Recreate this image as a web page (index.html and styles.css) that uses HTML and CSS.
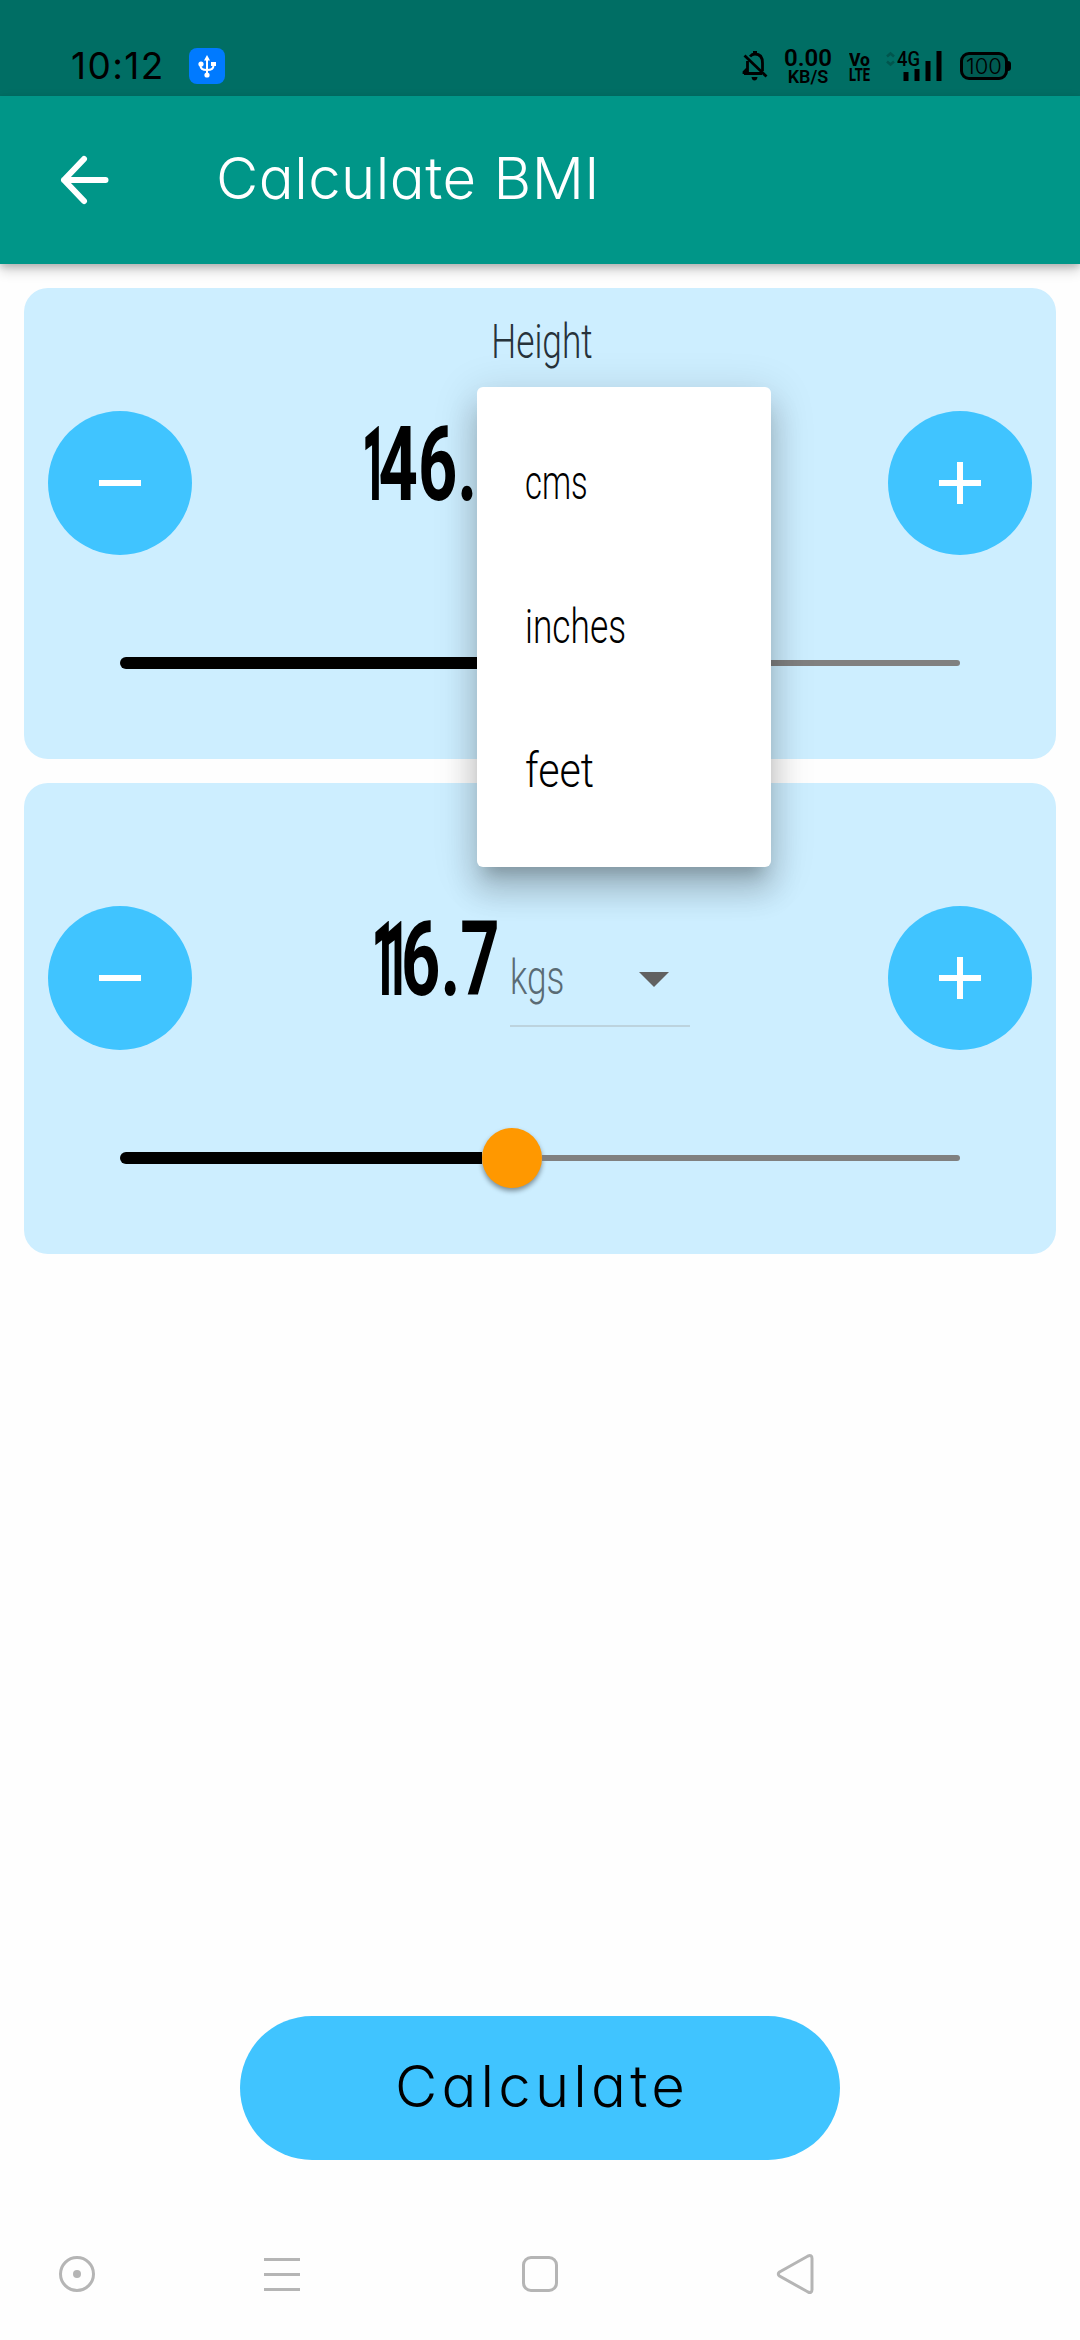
FILE: index.html
```html
<!DOCTYPE html>
<html lang="en">
<head>
<meta charset="utf-8">
<title>Calculate BMI</title>
<link rel="stylesheet" href="styles.css">
</head>
<body>
<div class="screen">
  <header class="status">
    <span class="clock">10:12</span>
    <svg class="usb" viewBox="0 0 36 36"><rect width="36" height="36" rx="8" fill="#007aff"/><path d="M18 9v18M11.500 16v1.500q0 4.500 6.500 4.500t6.500-4.500V16" fill="none" stroke="#fff" stroke-width="2"/><path d="M18 7l3 5.500h-6zM22 14h5v4h-5z" fill="#fff"/><circle cx="12" cy="16" r="2.600" fill="#fff"/><circle cx="18" cy="27" r="2.600" fill="#fff"/></svg>
    <svg class="bell" viewBox="0 0 26 32"><path d="M8 6.500Q10 4 13 4q7.500 0 7.500 9v8M5.500 11v11M2 23.500h18M2 24v-2l4-4" fill="none" stroke="#000" stroke-width="2.800"/><path d="M11 1h4v4h-4zM9.500 27h6q-.5 3.500-3 3.500t-3-3.500z"/><path d="M2.500 5.500L24.500 26.500" stroke="#000" stroke-width="2.800"/></svg>
    <div class="speed"><span class="rate">0.00</span><span class="rate-unit">KB/S</span></div>
    <div class="volte"><span class="vo">Vo</span><span class="lte">LTE</span></div>
    <div class="signal"><svg viewBox="0 0 56 32"><path d="M1 6.500l3.500-3 3.500 3M1 11.500l3.500 3 3.500-3" fill="none" stroke="#00564e" stroke-width="2.600"/><path d="M17.500 22h5v9h-5zM28.500 19h5v12h-5zM39.500 11h5v20h-5zM50.500 1h5v30h-5z"/></svg><span class="net">4G</span></div>
    <div class="battery">100</div>
  </header>
  <div class="appbar">
    <svg class="back" viewBox="0 0 54 60"><path d="M48.500 30H7M27 9L7 30l20 21" fill="none" stroke="#fff" stroke-width="6" stroke-linecap="round" stroke-linejoin="round"/></svg>
    <h1 class="title">Calculate BMI</h1>
  </div>
  <main class="content">
    <section class="card">
      <h2 class="label"><span class="hand">Height</span></h2>
      <div class="row">
        <button class="round"><svg viewBox="0 0 42 42"><path d="M0 18h42v6H0z"/></svg></button>
        <div class="reading"><div class="value height-value"><span class="one">1</span>46.3</div></div>
        <button class="round"><svg viewBox="0 0 42 42"><path d="M0 18h42v6H0zM18 0h6v42h-6z"/></svg></button>
      </div>
      <div class="slider"><span class="fill"></span><span class="track"></span></div>
    </section>
    <section class="card">
      <h2 class="label"><span class="hand">Weight</span></h2>
      <div class="row">
        <button class="round"><svg viewBox="0 0 42 42"><path d="M0 18h42v6H0z"/></svg></button>
        <div class="reading"><div class="value weight-value"><span class="one first">1</span><span class="one">1</span>6.7</div>
          <div class="unit"><span class="hand">kgs</span><svg viewBox="0 0 30 15"><path d="M0 0h30L15 15z" fill="#616161"/></svg></div></div>
        <button class="round"><svg viewBox="0 0 42 42"><path d="M0 18h42v6H0zM18 0h6v42h-6z"/></svg></button>
      </div>
      <div class="slider"><span class="fill"></span><span class="thumb"></span><span class="track"></span></div>
    </section>
  </main>
  <button class="calculate">Calculate</button>
  <nav class="nav">
    <svg viewBox="0 0 40 42"><circle cx="20" cy="21" r="16.500"/><circle cx="20" cy="21" r="4" fill="#b5b5b5" stroke="none"/></svg>
    <svg viewBox="0 0 40 42"><path d="M2 6.500h36M2 21.500h36M2 36.500h36"/></svg>
    <svg viewBox="0 0 40 42"><rect x="3.500" y="4.500" width="33" height="33" rx="7.500"/></svg>
    <svg viewBox="0 0 40 42"><path d="M3.500 19L32 3q4-1.500 4 2.500v31q0 4-4 2.500L3.500 23q-2.500-2 0-4z"/></svg>
  </nav>
  <div class="menu">
    <span class="item"><span class="hand cms">cms</span></span>
    <span class="item"><span class="hand inches">inches</span></span>
    <span class="item"><span class="hand feet">feet</span></span>
  </div>
</div>
</body>
</html>
```
FILE: styles.css
```css
* { box-sizing: border-box; }
body { margin: 0; background: #fff; }
button { border: 0; padding: 0; font: inherit; color: inherit; }
h1, h2 { margin: 0; font-weight: inherit; }
.screen { position: relative; width: 1080px; height: 2340px; display: flex; flex-direction: column; background: #fefefe; overflow: hidden; color: #000; }

.status { height: 96px; flex: none; background: #006e64; display: flex; align-items: flex-start; padding: 48px 0 0 71px; font-family: Roboto, sans-serif; }
.clock { width: 118px; font: 400 37px/36px Inter, sans-serif; letter-spacing: 1.4px; }
.usb { width: 36px; height: 36px; margin-right: 517px; }
.bell { width: 26px; height: 32px; margin: 2px 15px 0 0; }
.speed { width: 50px; display: flex; flex-direction: column; align-items: center; font-weight: 600; margin-right: 16px; }
.rate { font-size: 24px; line-height: 20px; }
.rate-unit { font-size: 18px; line-height: 18px; }
.volte { width: 24px; display: flex; flex-direction: column; align-items: flex-start; font-weight: 800; font-size: 19px; line-height: 15px; padding-top: 4px; margin-right: 13px; }
.vo { transform: scaleX(.92); transform-origin: left; }
.lte { transform: scaleX(.68); transform-origin: left; }
.signal { width: 56px; height: 32px; position: relative; margin: 2px 18px 0 0; }
.signal svg { width: 56px; height: 32px; display: block; }
.net { position: absolute; left: 11px; top: -1px; font-size: 20px; line-height: 20px; font-weight: 500; transform: scaleX(.92); transform-origin: left; }
.battery { position: relative; width: 48px; height: 28px; margin-top: 4px; border: 3px solid #000; border-radius: 9px; background: #005a51; display: flex; align-items: center; justify-content: center; font: 300 22px/22px Inter, sans-serif; }
.battery::after { content: ""; position: absolute; right: -6px; top: 6px; width: 4px; height: 10px; border-radius: 0 3px 3px 0; background: #000; }

.appbar { height: 168px; flex: none; background: #009688; display: flex; align-items: center; padding-left: 57px; box-shadow: 0 6px 12px rgba(0,0,0,.2), 0 3px 6px rgba(0,0,0,.14); }
.back { width: 54px; height: 60px; }
.title { margin-left: 105px; padding-bottom: 4px; font: 350 58px/84px Inter, sans-serif; font-feature-settings: "cv11"; letter-spacing: .5px; color: #fff; }

.content { padding: 24px 24px 0; display: flex; flex-direction: column; gap: 24px; }
.card { height: 471px; background: #cdeeff; border-radius: 24px; padding: 0 24px; }
.label { height: 108px; margin-bottom: 15px; display: flex; justify-content: center; line-height: 108px; color: #27323a; }
.hand { font-family: Roboto, sans-serif; font-weight: 300; font-size: 49px; display: inline-block; transform: scaleX(.72); transform-origin: left; }
.label .hand { transform-origin: center; padding-left: 4px; }
.cms { transform: scaleX(.67); }
.feet { transform: scaleX(.84); }
.row { display: grid; grid-template-columns: 144px 1fr 144px; height: 144px; }
.round { width: 144px; height: 144px; border-radius: 50%; background: #40c4ff; display: flex; align-items: center; justify-content: center; }
.round svg { width: 42px; height: 42px; fill: #fff; }
.reading { display: flex; }
.value { flex: none; font: 700 104px/108px Roboto, sans-serif; white-space: nowrap; transform: scaleX(.66); transform-origin: left; }
.height-value { width: 148px; margin-left: 170px; }
.weight-value { width: 138px; margin-left: 180px; }
.one { display: inline-block; width: 25px; font-weight: 900; transform: scaleX(.6); transform-origin: left; }
.one.first { width: 19px; }
.unit { width: 180px; flex: none; height: 121px; border-bottom: 2px solid #bcd3de; display: flex; align-items: flex-start; justify-content: space-between; line-height: 144px; color: #5a6b74; }
.unit svg { width: 30px; height: 15px; margin: 66px 21px 0 0; }
.slider { margin: 78px 72px 0; height: 60px; display: flex; align-items: center; }
.fill { width: 362px; height: 12px; border-radius: 6px 0 0 6px; background: #000; }
.track { flex: 1; height: 6px; border-radius: 0 3px 3px 0; background: #808080; }
.thumb { width: 60px; height: 60px; border-radius: 50%; background: #ff9800; box-shadow: 0 3px 5px rgba(0,0,0,.4); }

.calculate { width: 600px; height: 144px; margin: 762px auto 0; padding: 0 0 4px 4px; flex: none; border-radius: 72px; background: #40c4ff; font: 350 58px/140px Inter, sans-serif; letter-spacing: 4.2px; font-feature-settings: "cv11"; }
.nav { margin: 93px 0 0 57px; width: 759px; display: grid; grid-template-columns: 187px 276px 256px 40px; }
.nav svg { width: 40px; height: 42px; fill: none; stroke: #b5b5b5; stroke-width: 3; }
.nav svg:nth-child(2) { margin-left: 18px; }

.menu { position: absolute; left: 477px; top: 387px; width: 294px; height: 480px; padding: 24px 48px; background: #fff; border-radius: 6px; display: flex; flex-direction: column; box-shadow: 0 15px 15px -9px rgba(0,0,0,.2), 0 24px 30px 3px rgba(0,0,0,.14), 0 9px 42px 6px rgba(0,0,0,.12); }
.item { height: 144px; line-height: 144px; }
```
